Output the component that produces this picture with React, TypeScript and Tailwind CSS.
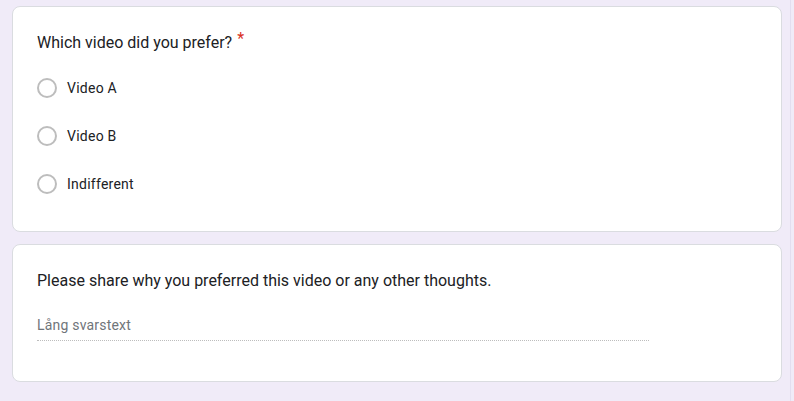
import React from "react";

const options = ["Video A", "Video B", "Indifferent"];

export default function App() {
  return (
    <div
      className="w-[794px] h-[401px] bg-[#f0ebf8] overflow-hidden flex"
      style={{ fontFamily: "Roboto, 'Liberation Sans', Arial, sans-serif" }}
    >
      <div className="pl-3 pt-[6px] flex flex-col gap-3 w-[782px]">
        <div className="bg-white border border-[#dadce0] rounded-lg w-[770px] px-6 pt-6 pb-[23px]">
          <div className="text-[16px] leading-6 text-[#202124]">
            Which video did you prefer?
            <span className="text-[#d93025] ml-[5px] relative top-[-4px]">*</span>
          </div>
          <div className="mt-[9px] flex flex-col">
            {options.map((o) => (
              <div key={o} className="h-12 flex items-center">
                <div className="w-5 h-5 rounded-full border-2 border-[#bdbdbd] box-border" />
                <span className="ml-[10px] text-[14px] leading-5 text-[#202124] tracking-[0.25px]">
                  {o}
                </span>
              </div>
            ))}
          </div>
        </div>
        <div className="bg-white border border-[#dadce0] rounded-lg w-[770px] px-6 pt-6 pb-10">
          <div className="text-[16px] leading-6 text-[#202124]">
            Please share why you preferred this video or any other thoughts.
          </div>
          <div className="mt-[20px] w-[612px] border-b border-dotted border-[#bdbdbd] pb-[3px]">
            <span className="text-[14px] leading-5 text-[#70757a] tracking-[0.2px]">
              Lång svarstext
            </span>
          </div>
        </div>
      </div>
      <div className="ml-[8px] w-px h-full bg-[#e3def0]" />
    </div>
  );
}
